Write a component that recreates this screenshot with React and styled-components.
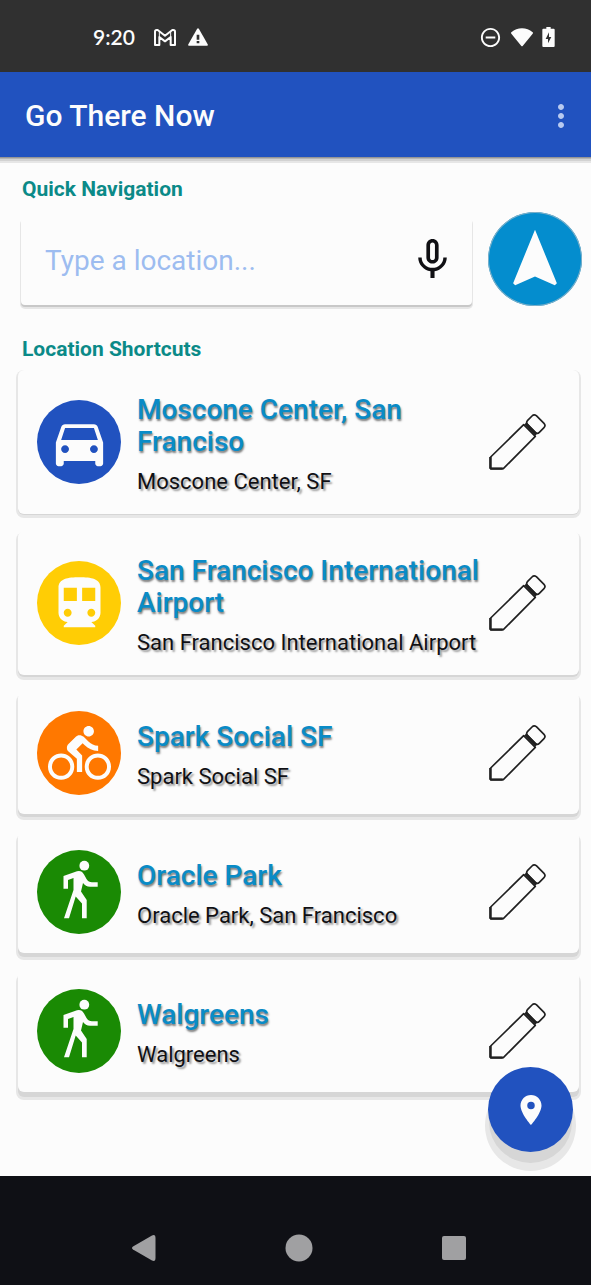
import { styled, createGlobalStyle } from "styled-components";
import {
  MdDirectionsBike,
  MdDirectionsCar,
  MdDirectionsSubway,
  MdLocationOn,
  MdMicNone,
  MdMoreVert,
  MdNavigation,
  MdOutlineDoNotDisturbOn,
} from "react-icons/md";

const GlobalStyle = createGlobalStyle`
  * {
    box-sizing: border-box;
  }
  body {
    margin: 0;
    background: #fcfcfc;
    font-family: Roboto, "Liberation Sans", sans-serif;
  }
  button {
    padding: 0;
    border: none;
    background: none;
    cursor: pointer;
  }
  svg {
    display: block;
  }
`;

const Screen = styled.div`
  display: flex;
  flex-direction: column;
  min-height: 100vh;
`;

const StatusBar = styled.div`
  display: flex;
  align-items: center;
  justify-content: space-between;
  height: 72px;
  padding: 2px 36px 0 93px;
  background: #303030;
  color: #fcfcfc;
`;

const StatusGroup = styled.div`
  display: flex;
  align-items: center;
  gap: ${({ $gap }) => $gap}px;
`;

const Clock = styled.span`
  margin-right: 7px;
  font-family: Lato, sans-serif;
  font-size: 21px;
  font-weight: 600;
  line-height: 24px;
`;

const AppBar = styled.header`
  display: flex;
  align-items: center;
  justify-content: space-between;
  height: 85px;
  padding: 2px 12px 0 25px;
  background: #2152bf;
  box-shadow:
    0 1px 0 #969696,
    0 2px 0 #b4b4b4,
    0 4px 0 #d2d2d2,
    0 6px 0 #e6e6e6;
`;

const AppTitle = styled.h1`
  margin: 0;
  color: #fcfcfc;
  font-size: 30px;
  font-weight: 500;
  line-height: 36px;
`;

const MenuButton = styled.button`
  color: #b8caf0;
`;

const Main = styled.main`
  position: relative;
  flex: 1;
  padding: 19px 0 84px;
`;

const SectionTitle = styled.h2`
  margin: 0;
  padding: 0 22px;
  color: #0b8a88;
  font-size: 21px;
  font-weight: 700;
  line-height: 26px;
`;

const SearchRow = styled.form`
  display: flex;
  align-items: flex-end;
  gap: 16px;
  margin: 10px 0 30px;
  padding: 0 9px 0 21px;
`;

const SearchBox = styled.div`
  display: flex;
  flex: 1;
  align-items: center;
  min-width: 0;
  height: 88px;
  margin-bottom: 1px;
  padding: 0 15px 0 24px;
  border-radius: 4px;
  background: #fcfcfc;
  box-shadow:
    0 2px 0 #c8c8c8,
    0 3px 0 1px #e6e6e6;
`;

const SearchInput = styled.input`
  flex: 1;
  min-width: 0;
  padding: 0;
  border: none;
  outline: none;
  background: transparent;
  color: #2152bf;
  font-family: inherit;
  font-size: 28px;
  line-height: 32px;

  &::placeholder {
    color: #9dbcf0;
    opacity: 1;
  }
`;

const MicButton = styled.button`
  padding-bottom: 4px;
  color: #101014;
`;

const GoButton = styled.button`
  display: flex;
  flex: none;
  align-items: center;
  justify-content: center;
  width: 94px;
  height: 94px;
  border-radius: 50%;
  background: #048dce;
  box-shadow: inset 0 0 0 1px #7fb0c8;
  color: #fcfcfc;
`;

const ShortcutList = styled.ul`
  display: flex;
  flex-direction: column;
  gap: 17px;
  margin: 8px 0 0;
  padding: 0 12px 0 18px;
  list-style: none;
`;

const ShortcutCard = styled.li`
  display: flex;
  align-items: center;
  gap: 16px;
  padding: 19px 33px 19px 19px;
  border-radius: 6px;
  background: #fcfcfc;
  box-shadow:
    0 ${({ $depth }) => $depth}px 0 #d6d6d6,
    0 ${({ $depth }) => $depth + 1}px 0 2px #e7e7e7;
`;

const ModeBadge = styled.div`
  display: flex;
  flex: none;
  align-items: center;
  justify-content: center;
  width: 84px;
  height: 84px;
  border-radius: 50%;
  background: ${({ $color }) => $color};
  color: #fcfcfc;
`;

const ShortcutText = styled.div`
  flex: 1;
  min-width: 0;
  padding-top: 5px;
`;

const ShortcutName = styled.h3`
  margin: 0 0 11px;
  color: #0a8bc6;
  font-size: 28px;
  font-weight: 500;
  line-height: 32px;
  text-shadow: 1px 2px 2px rgba(0, 0, 0, 0.5);
`;

const ShortcutAddress = styled.p`
  margin: 0;
  color: #101014;
  font-size: 22px;
  line-height: 26px;
  text-shadow: 2px 2px 2px rgba(0, 0, 0, 0.4);
`;

const EditButton = styled.button`
  flex: none;
  margin-left: -8px;
`;

const Fab = styled.button`
  position: absolute;
  right: 18px;
  bottom: 24px;
  display: flex;
  align-items: center;
  justify-content: center;
  width: 85px;
  height: 85px;
  border-radius: 50%;
  background: #2152bf;
  box-shadow:
    0 12px 0 -1px #d6d6d6,
    0 16px 0 3px #e7e7e7;
  color: #fcfcfc;
`;

const SystemNav = styled.nav`
  display: flex;
  justify-content: center;
  gap: 107px;
  height: 109px;
  padding: 48px 0 0 6px;
  background: #0f1015;
`;

const SystemButton = styled.button`
  display: flex;
  align-items: center;
  justify-content: center;
  width: 48px;
  height: 48px;
`;

const MailIcon = () => (
  <svg width="22" height="17" viewBox="0 0 66 51" fill="none" stroke="#fcfcfc" strokeWidth="6" strokeLinejoin="round">
    <path d="M3 8Q3 3 8 3H11L33 20L55 3H58Q63 3 63 8V48H50V24L33 37L16 24V48H3Z" />
    <path d="M16 24V9M50 24V9" strokeWidth="3" />
  </svg>
);

const WarningIcon = () => (
  <svg width="20" height="18" viewBox="0 0 60 54">
    <path fill="#fcfcfc" d="M27 3Q30 -1 33 3L59 49Q61 53 57 53H3Q-1 53 1 49Z" />
    <path fill="#303030" d="M26 20H34V35H26ZM26 39H34V46H26Z" />
  </svg>
);

const WifiIcon = () => (
  <svg width="22" height="19" viewBox="0 0 66 57" fill="#fcfcfc">
    <path d="M1 17Q-1 15 1 13Q15 1 33 1T65 13Q67 15 65 17L35 54Q33 56 31 54Z" />
  </svg>
);

const BatteryIcon = () => (
  <svg width="13" height="20" viewBox="0 0 39 60">
    <path fill="#fcfcfc" d="M13 0H26V5H35Q38 5 38 8V57Q38 60 35 60H4Q1 60 1 57V8Q1 5 4 5H13Z" />
    <path fill="#303030" d="M21 16V30H28L18 49V36H11Z" />
  </svg>
);

const WalkIcon = () => (
  <svg width="84" height="84" viewBox="0 0 84 84" fill="currentColor">
    <circle cx="47.3" cy="15.7" r="4.9" />
    <path d="M26.5 26L40 21.3Q44.5 20 47 24.5L49.5 29Q51.5 32.3 55 32.3H60.7V36.8H53Q48.5 36.5 46 33L44 41.5L49.7 50V68.3H45V53.5L38.7 46.5L32 68.3H27L36.5 40V28L31 30V38.7H26.5Z" />
  </svg>
);

const PencilIcon = () => (
  <svg width="58" height="58" viewBox="0 0 174 174" fill="none" stroke="#202020" strokeWidth="5" strokeLinejoin="round">
    <path d="M8 167V132L107 35L142 70L46 167Z" />
    <path d="M7 167V132M7 167H44" strokeWidth="7" />
    <path d="M132 9Q138 3 145 8L168 31Q174 38 168 44L154 58Q148 64 142 58L119 35Q113 29 119 22Z" />
    <path d="M112 31L145 65" strokeWidth="9" />
  </svg>
);

const modes = {
  car: { color: "#2152bf", icon: <MdDirectionsCar size={63} /> },
  train: { color: "#ffcd05", icon: <MdDirectionsSubway size={63} /> },
  bike: { color: "#ff7800", icon: <MdDirectionsBike size={63} /> },
  walk: { color: "#1a8a04", icon: <WalkIcon /> },
};

const shortcuts = [
  { name: "Moscone Center, San Franciso", address: "Moscone Center, SF", mode: "car" },
  { name: "San Francisco International Airport", address: "San Francisco International Airport", mode: "train" },
  { name: "Spark Social SF", address: "Spark Social SF", mode: "bike" },
  { name: "Oracle Park", address: "Oracle Park, San Francisco", mode: "walk" },
  { name: "Walgreens", address: "Walgreens", mode: "walk" },
];

const Shortcut = ({ shortcut, depth }) => {
  const mode = modes[shortcut.mode];

  return (
    <ShortcutCard $depth={depth}>
      <ModeBadge $color={mode.color}>{mode.icon}</ModeBadge>
      <ShortcutText>
        <ShortcutName>{shortcut.name}</ShortcutName>
        <ShortcutAddress>{shortcut.address}</ShortcutAddress>
      </ShortcutText>
      <EditButton type="button" aria-label={`Edit ${shortcut.name}`}>
        <PencilIcon />
      </EditButton>
    </ShortcutCard>
  );
};

const App = () => (
  <Screen>
    <GlobalStyle />
    <StatusBar>
      <StatusGroup $gap={12}>
        <Clock>9:20</Clock>
        <MailIcon />
        <WarningIcon />
      </StatusGroup>
      <StatusGroup $gap={9}>
        <MdOutlineDoNotDisturbOn size={23} />
        <WifiIcon />
        <BatteryIcon />
      </StatusGroup>
    </StatusBar>
    <AppBar>
      <AppTitle>Go There Now</AppTitle>
      <MenuButton type="button" aria-label="More options">
        <MdMoreVert size={36} />
      </MenuButton>
    </AppBar>
    <Main>
      <SectionTitle>Quick Navigation</SectionTitle>
      <SearchRow onSubmit={(e) => e.preventDefault()}>
        <SearchBox>
          <SearchInput type="text" placeholder="Type a location..." aria-label="Type a location" />
          <MicButton type="button" aria-label="Voice input">
            <MdMicNone size={49} />
          </MicButton>
        </SearchBox>
        <GoButton type="submit" aria-label="Navigate">
          <MdNavigation size={70} />
        </GoButton>
      </SearchRow>
      <SectionTitle>Location Shortcuts</SectionTitle>
      <ShortcutList>
        {shortcuts.map((shortcut, i) => (
          <Shortcut key={shortcut.name} shortcut={shortcut} depth={i + 1} />
        ))}
      </ShortcutList>
      <Fab type="button" aria-label="Add current location">
        <MdLocationOn size={36} />
      </Fab>
    </Main>
    <SystemNav>
      <SystemButton type="button" aria-label="Back">
        <svg width="26" height="28" viewBox="0 0 26 28" fill="#a0a0a2">
          <path d="M2 12.5L21 1.5Q24.5 0 24.5 4V24Q24.5 28 21 26.5L2 15.5Q0 14 2 12.5Z" />
        </svg>
      </SystemButton>
      <SystemButton type="button" aria-label="Home">
        <svg width="28" height="28" viewBox="0 0 28 28" fill="#a0a0a2">
          <circle cx="14" cy="14" r="13.5" />
        </svg>
      </SystemButton>
      <SystemButton type="button" aria-label="Recent apps">
        <svg width="24" height="24" viewBox="0 0 24 24" fill="#a0a0a2">
          <rect width="24" height="24" rx="2" />
        </svg>
      </SystemButton>
    </SystemNav>
  </Screen>
);

export default App;
